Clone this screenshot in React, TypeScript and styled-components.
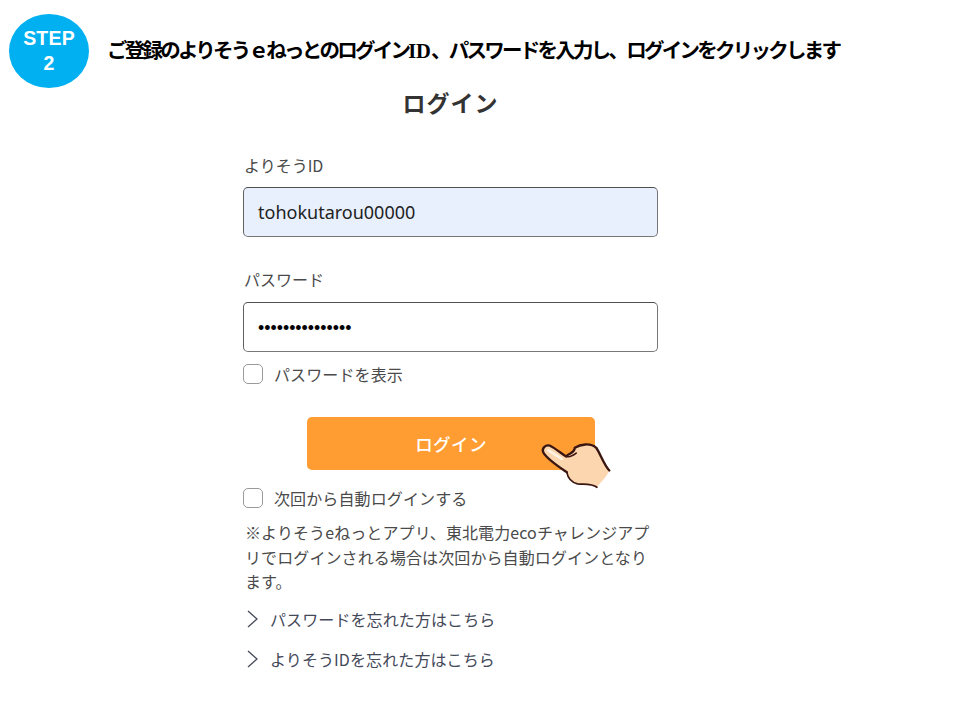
import React from "react";
import styled, { createGlobalStyle } from "styled-components";

const Global = createGlobalStyle`
  html, body { margin: 0; padding: 0; background: #fff; }
  body { font-family: "Noto Sans CJK JP", "Noto Sans", sans-serif; color: #3c3c3c; }
`;
const Page = styled.div`
  width: 957px; height: 714px; overflow: hidden; display: flex; flex-direction: column;
`;
const Header = styled.header`
  display: flex; align-items: center; height: 74px; margin-top: 14px; padding-left: 9px; gap: 18px;
`;
const Badge = styled.div`
  width: 80px; height: 74px; border-radius: 50%; background: #00b0f0; color: #fff;
  display: flex; flex-direction: column; align-items: center; justify-content: center;
  font-family: "Liberation Sans", sans-serif; font-weight: 700; font-size: 19.5px; line-height: 25px; letter-spacing: 0.2px;
`;
const Instruction = styled.h2`
  margin: 0 0 2px; font-size: 20.5px; font-weight: 700; color: #000; line-height: 28px; letter-spacing: -2.75px; white-space: nowrap;
`;
const Latin = styled.span`
  font-family: "Liberation Serif", serif; letter-spacing: 0;
`;
const Form = styled.main`
  width: 415px; margin-left: 243px; display: flex; flex-direction: column;
`;
const Title = styled.h1`
  margin: -3px 0 0; height: 34px; text-align: center; font-size: 23px; line-height: 34px; font-weight: 700; color: #333;
  letter-spacing: 1px;
`;
const Label = styled.label<{ $top: number }>`
  display: block; margin-top: ${(p) => p.$top}px; padding-left: 1px; font-size: 16px; line-height: 24px; color: #4a4a4a;
`;
const Input = styled.div<{ $filled?: boolean; $top: number }>`
  box-sizing: border-box; height: 50px; margin-top: ${(p) => p.$top}px; border: 1px solid #777; border-top-color: #505050; border-left-color: #606060; border-radius: 5px;
  background: ${(p) => (p.$filled ? "#e8f0fe" : "#fff")}; padding-left: 14px;
  display: flex; align-items: center; font-size: 18px; color: #222; font-family: "Noto Sans", sans-serif;
`;
const Dots = styled.span`
  font-size: 17.8px; color: #000; font-family: "Liberation Sans", sans-serif; padding-top: 3px;
`;
const CheckRow = styled.div<{ $top: number }>`
  display: flex; align-items: center; gap: 11px; margin-top: ${(p) => p.$top}px; height: 22px;
  font-size: 16px; color: #4a4a4a; letter-spacing: 0.12px;
`;
const Box = styled.span`
  box-sizing: border-box; width: 20px; height: 20px; border: 1.5px solid #9a9a9a; border-radius: 5px; background: #fff;
`;
const ButtonWrap = styled.div`
  position: relative; width: 288px; margin: 32px 0 0 64px;
`;
const Button = styled.button`
  display: block; width: 288px; height: 53px; border: 0; border-radius: 5px; background: #ff9d33; color: #fff;
  font: 500 17.5px "Noto Sans CJK JP", sans-serif; letter-spacing: 0.4px; padding: 0;
`;
const Hand = styled.svg`
  position: absolute; left: 233px; top: 25px; width: 72px; height: 47px;
`;
const Note = styled.p`
  margin: 11px 0 0; padding-left: 2px; width: 408px; font-size: 16px; line-height: 24.5px; color: #4a4a4a; letter-spacing: 0.1px;
`;
const LinkRow = styled.a<{ $top: number }>`
  display: flex; align-items: center; gap: 12px; margin-top: ${(p) => p.$top}px; height: 24px; padding-left: 4px;
  font-size: 16px; color: #44495a; letter-spacing: 0.1px;
`;
const Chevron = styled.svg`
  width: 11px; height: 18px; flex: none;
`;

export default function App() {
  return (
    <Page>
      <Global />
      <Header>
        <Badge><span>STEP</span><span>2</span></Badge>
        <Instruction>ご登録のよりそうｅねっとのログイン<Latin>ID</Latin>、パスワードを入力し、ログインをクリックします</Instruction>
      </Header>
      <Form>
        <Title>ログイン</Title>
        <Label $top={34}>よりそうID</Label>
        <Input $filled $top={10}>tohokutarou00000</Input>
        <Label $top={30}>パスワード</Label>
        <Input $top={11}><Dots>•••••••••••••••</Dots></Input>
        <CheckRow $top={11}><Box />パスワードを表示</CheckRow>
        <ButtonWrap>
          <Button>ログイン</Button>
          <Hand viewBox="120 115 215 140">
            <path d="M128 140 C128 130 138 124 150 126 L200 158 C208 146 222 148 224 132 C240 122 270 118 288 132 C300 150 312 185 327 200 C318 222 300 235 290 250 C270 240 230 245 212 228 L200 205 C175 188 140 165 128 140 Z" fill="#fcd6ae" />
            <path d="M145 140 L185 165" fill="none" stroke="#fff3e3" strokeWidth="8" strokeLinecap="round" />
            <path d="M200 205 C175 188 140 165 130 146 C124 134 136 122 150 126 C165 133 185 150 198 158 C208 146 222 150 224 132 C240 122 270 116 288 132 C300 150 312 185 327 200" fill="none" stroke="#3a1612" strokeWidth="7" strokeLinecap="round" strokeLinejoin="round" />
            <path d="M200 158 C205 160 215 158 228 148 M200 205 C203 222 212 235 232 240 C250 242 275 238 290 250" fill="none" stroke="#3a1612" strokeWidth="5" strokeLinecap="round" />
          </Hand>
        </ButtonWrap>
        <CheckRow $top={17}><Box />次回から自動ログインする</CheckRow>
        <Note>※よりそうeねっとアプリ、東北電力ecoチャレンジアプリでログインされる場合は次回から自動ログインとなります。</Note>
        <LinkRow $top={13}>
          <Chevron viewBox="0 0 11 18"><path d="M1 1 L10 9 L1 17" fill="none" stroke="#44495a" strokeWidth="1.3" /></Chevron>
          パスワードを忘れた方はこちら
        </LinkRow>
        <LinkRow $top={16}>
          <Chevron viewBox="0 0 11 18"><path d="M1 1 L10 9 L1 17" fill="none" stroke="#44495a" strokeWidth="1.3" /></Chevron>
          よりそうIDを忘れた方はこちら
        </LinkRow>
      </Form>
    </Page>
  );
}
